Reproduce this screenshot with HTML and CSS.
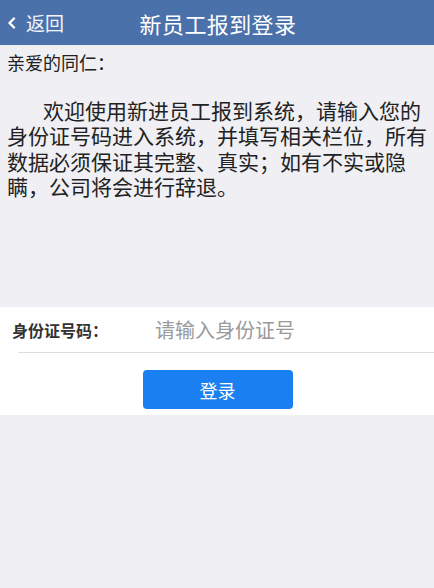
FILE: index.html
```html
<!DOCTYPE html>
<html lang="zh-CN">
<head>
    <meta charset="UTF-8">
    <meta name="viewport" content="width=device-width, initial-scale=1.0">
    <title>新员工报到登录</title>
    <link rel="stylesheet" href="styles.css">
</head>
<body>
    <header class="nav">
        <a class="back" href="#">
            <svg class="back-icon" width="9" height="12" viewBox="0 0 9 12">
                <polyline points="7,1.5 2.5,6 7,10.5" fill="none" stroke="#fff" stroke-width="2.4" stroke-linecap="round" stroke-linejoin="round"/>
            </svg>
            <span>返回</span>
        </a>
        <h1 class="title">新员工报到登录</h1>
        <span></span>
    </header>

    <div class="intro">
        <p class="greeting">亲爱的同仁：</p>
        <p class="notice">欢迎使用新进员工报到系统，请输入您的身份证号码进入系统，并填写相关栏位，所有数据必须保证其完整、真实；如有不实或隐瞒，公司将会进行辞退。</p>
    </div>

    <form class="login" id="loginForm">
        <div class="field">
            <label for="idcard">身份证号码：</label>
            <input type="text" id="idcard" placeholder="请输入身份证号">
        </div>
        <div class="actions">
            <button type="submit">登录</button>
        </div>
    </form>
</body>
</html>
```

FILE: styles.css
```css
* {
    margin: 0;
    padding: 0;
    box-sizing: border-box;
    font-family: 'Noto Sans CJK SC', 'Noto Sans', sans-serif;
}

body {
    background-color: #efeff4;
    color: #222;
    min-height: 100vh;
}

.nav {
    height: 45px;
    background-color: #4b71aa;
    display: grid;
    grid-template-columns: 1fr auto 1fr;
    align-items: center;
    color: #fff;
}

.back {
    display: flex;
    align-items: center;
    gap: 10px;
    padding-left: 7px;
    color: #f2f5fa;
    text-decoration: none;
    font-size: 19px;
}

.back span {
    line-height: 1;
}

.title {
    font-size: 22px;
    font-weight: 400;
    letter-spacing: 0.4px;
    padding-left: 2px;
}

.intro {
    padding: 4px 5px 0 7px;
}

.greeting {
    font-size: 18px;
    line-height: 26px;
    margin-bottom: 23px;
}

.notice {
    font-size: 21px;
    line-height: 25.3px;
    text-indent: 36px;
}

.login {
    margin-top: 108px;
    background-color: #fff;
    padding-bottom: 6px;
}

.field {
    display: flex;
    align-items: center;
    height: 46px;
    margin-left: 18px;
    border-bottom: 1.5px solid #dedede;
}

.field label {
    width: 143px;
    margin-left: -6px;
    font-size: 16px;
    font-weight: 700;
    color: #333;
}

.field input {
    flex: 1;
    min-width: 0;
    border: none;
    outline: none;
    background: transparent;
    font-size: 20px;
    color: #333;
}

.field input::placeholder {
    color: #9a9a9a;
}

.actions {
    display: flex;
    justify-content: center;
    padding-top: 17px;
}

button {
    width: 150px;
    height: 39px;
    margin-left: 1px;
    background-color: #1a7ff0;
    color: #fff;
    border: none;
    border-radius: 4px;
    font-size: 18px;
    cursor: pointer;
}
```
